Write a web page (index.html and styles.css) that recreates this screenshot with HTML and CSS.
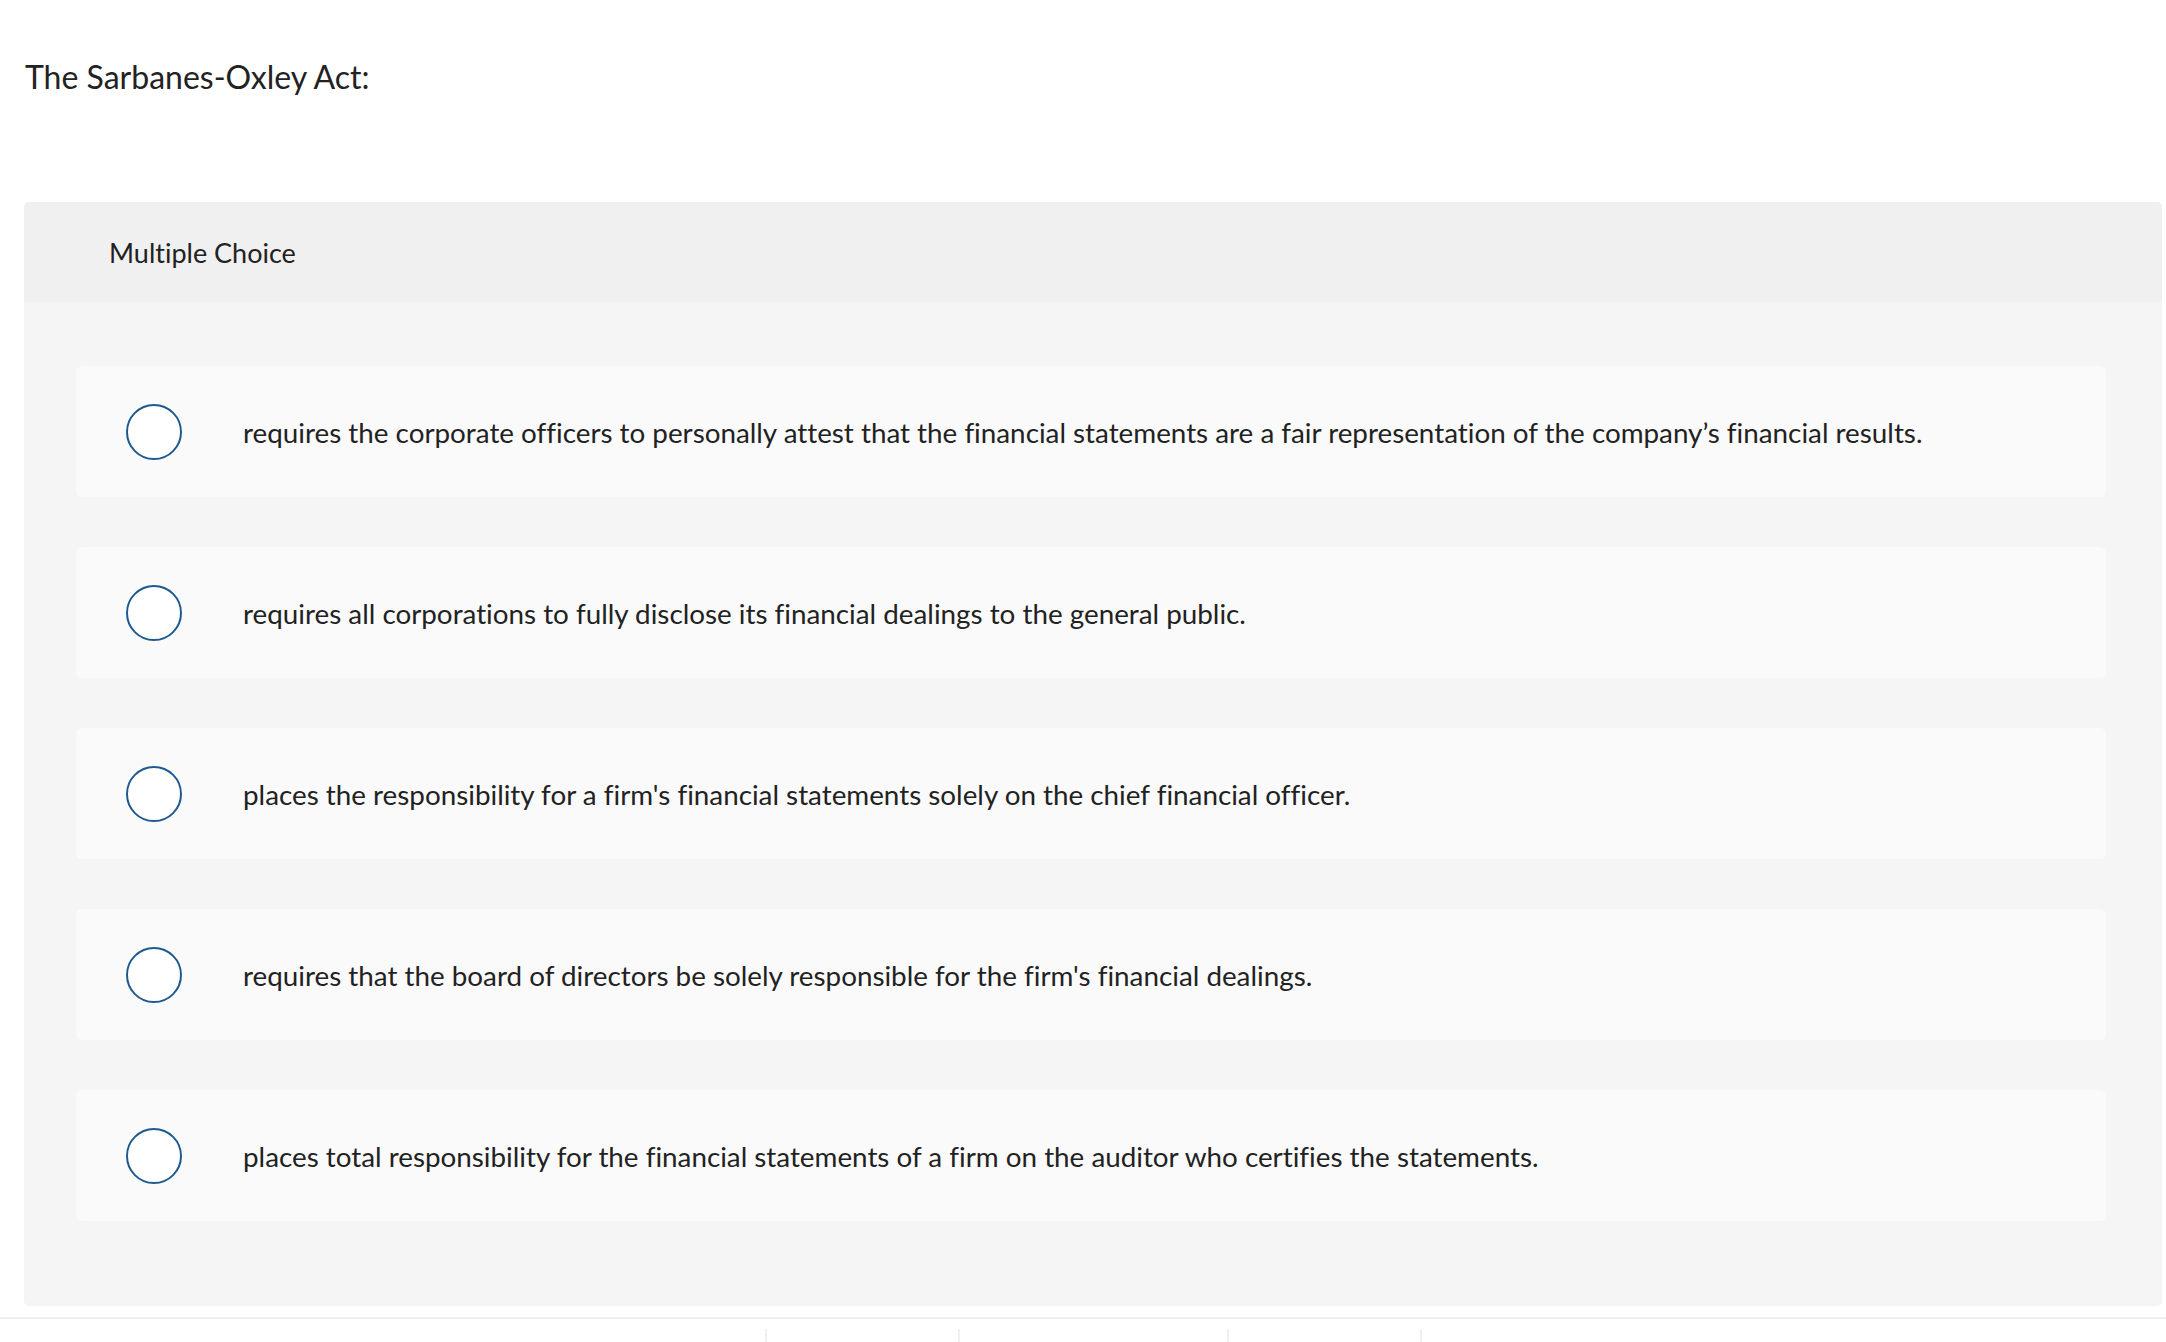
FILE: index.html
```html
<!DOCTYPE html>
<html lang="en">
<head>
    <meta charset="UTF-8">
    <meta name="viewport" content="width=device-width, initial-scale=1.0">
    <title>The Sarbanes-Oxley Act</title>
    <link rel="stylesheet" href="styles.css">
</head>
<body>

<div class="page">
    <!-- Question -->
    <div class="question">The Sarbanes-Oxley Act:</div>

    <!-- Answer panel -->
    <div class="panel">
        <div class="panel-header">Multiple Choice</div>

        <div class="choices">
            <label class="choice">
                <span class="radio"></span>
                <span class="choice-text">requires the corporate officers to personally attest that the financial statements are a fair representation of the company’s financial results.</span>
            </label>
            <label class="choice">
                <span class="radio"></span>
                <span class="choice-text">requires all corporations to fully disclose its financial dealings to the general public.</span>
            </label>
            <label class="choice">
                <span class="radio"></span>
                <span class="choice-text">places the responsibility for a firm's financial statements solely on the chief financial officer.</span>
            </label>
            <label class="choice">
                <span class="radio"></span>
                <span class="choice-text">requires that the board of directors be solely responsible for the firm's financial dealings.</span>
            </label>
            <label class="choice">
                <span class="radio"></span>
                <span class="choice-text">places total responsibility for the financial statements of a firm on the auditor who certifies the statements.</span>
            </label>
        </div>
    </div>
</div>

<!-- Footer nav -->
<div class="footer">
    <div class="footer-links">
        <span class="footer-link"></span>
        <span class="footer-link wide"></span>
        <span class="footer-link last"></span>
    </div>
</div>

</body>
</html>
```

FILE: styles.css
```css
body {
    margin: 0;
    font-family: Lato, "Open Sans", Arial, sans-serif;
    font-variant-ligatures: none;
    color: #222;
    background-color: #fff;
}
.page {
    padding: 0 4px 0 24px;
}
.question {
    padding-top: 57px;
    line-height: 40px;
    font-size: 32px;
    margin-bottom: 105px;
    padding-left: 1px;
}
.panel {
    background-color: #f5f5f5;
    border-radius: 5px;
    overflow: hidden;
}
.panel-header {
    height: 100px;
    display: flex;
    align-items: center;
    padding-left: 85px;
    background-color: #f0f0f0;
    font-size: 27px;
}
.choices {
    display: flex;
    flex-direction: column;
    gap: 50px;
    padding: 64px 56px 85px 52px;
}
.choice {
    display: flex;
    align-items: center;
    height: 131px;
    padding-left: 50px;
    background-color: #fafafa;
    border-radius: 6px;
    cursor: pointer;
}
.radio {
    flex: none;
    width: 52px;
    height: 52px;
    border: 2px solid #1f5a8f;
    border-radius: 50%;
    background-color: #fff;
    margin-right: 61px;
}
.choice-text {
    font-size: 27.8px;
    padding-top: 1px;
}
.footer {
    margin-top: 11px;
    border-top: 2px solid #efefef;
    padding-top: 10px;
}
.footer-links {
    display: flex;
    margin-left: 765px;
}
.footer-link {
    width: 191px;
    height: 40px;
    border-left: 2px solid #f0f0f0;
}
.footer-link.wide {
    width: 267px;
}
.footer-link.last {
    border-right: 2px solid #f0f0f0;
}
```
